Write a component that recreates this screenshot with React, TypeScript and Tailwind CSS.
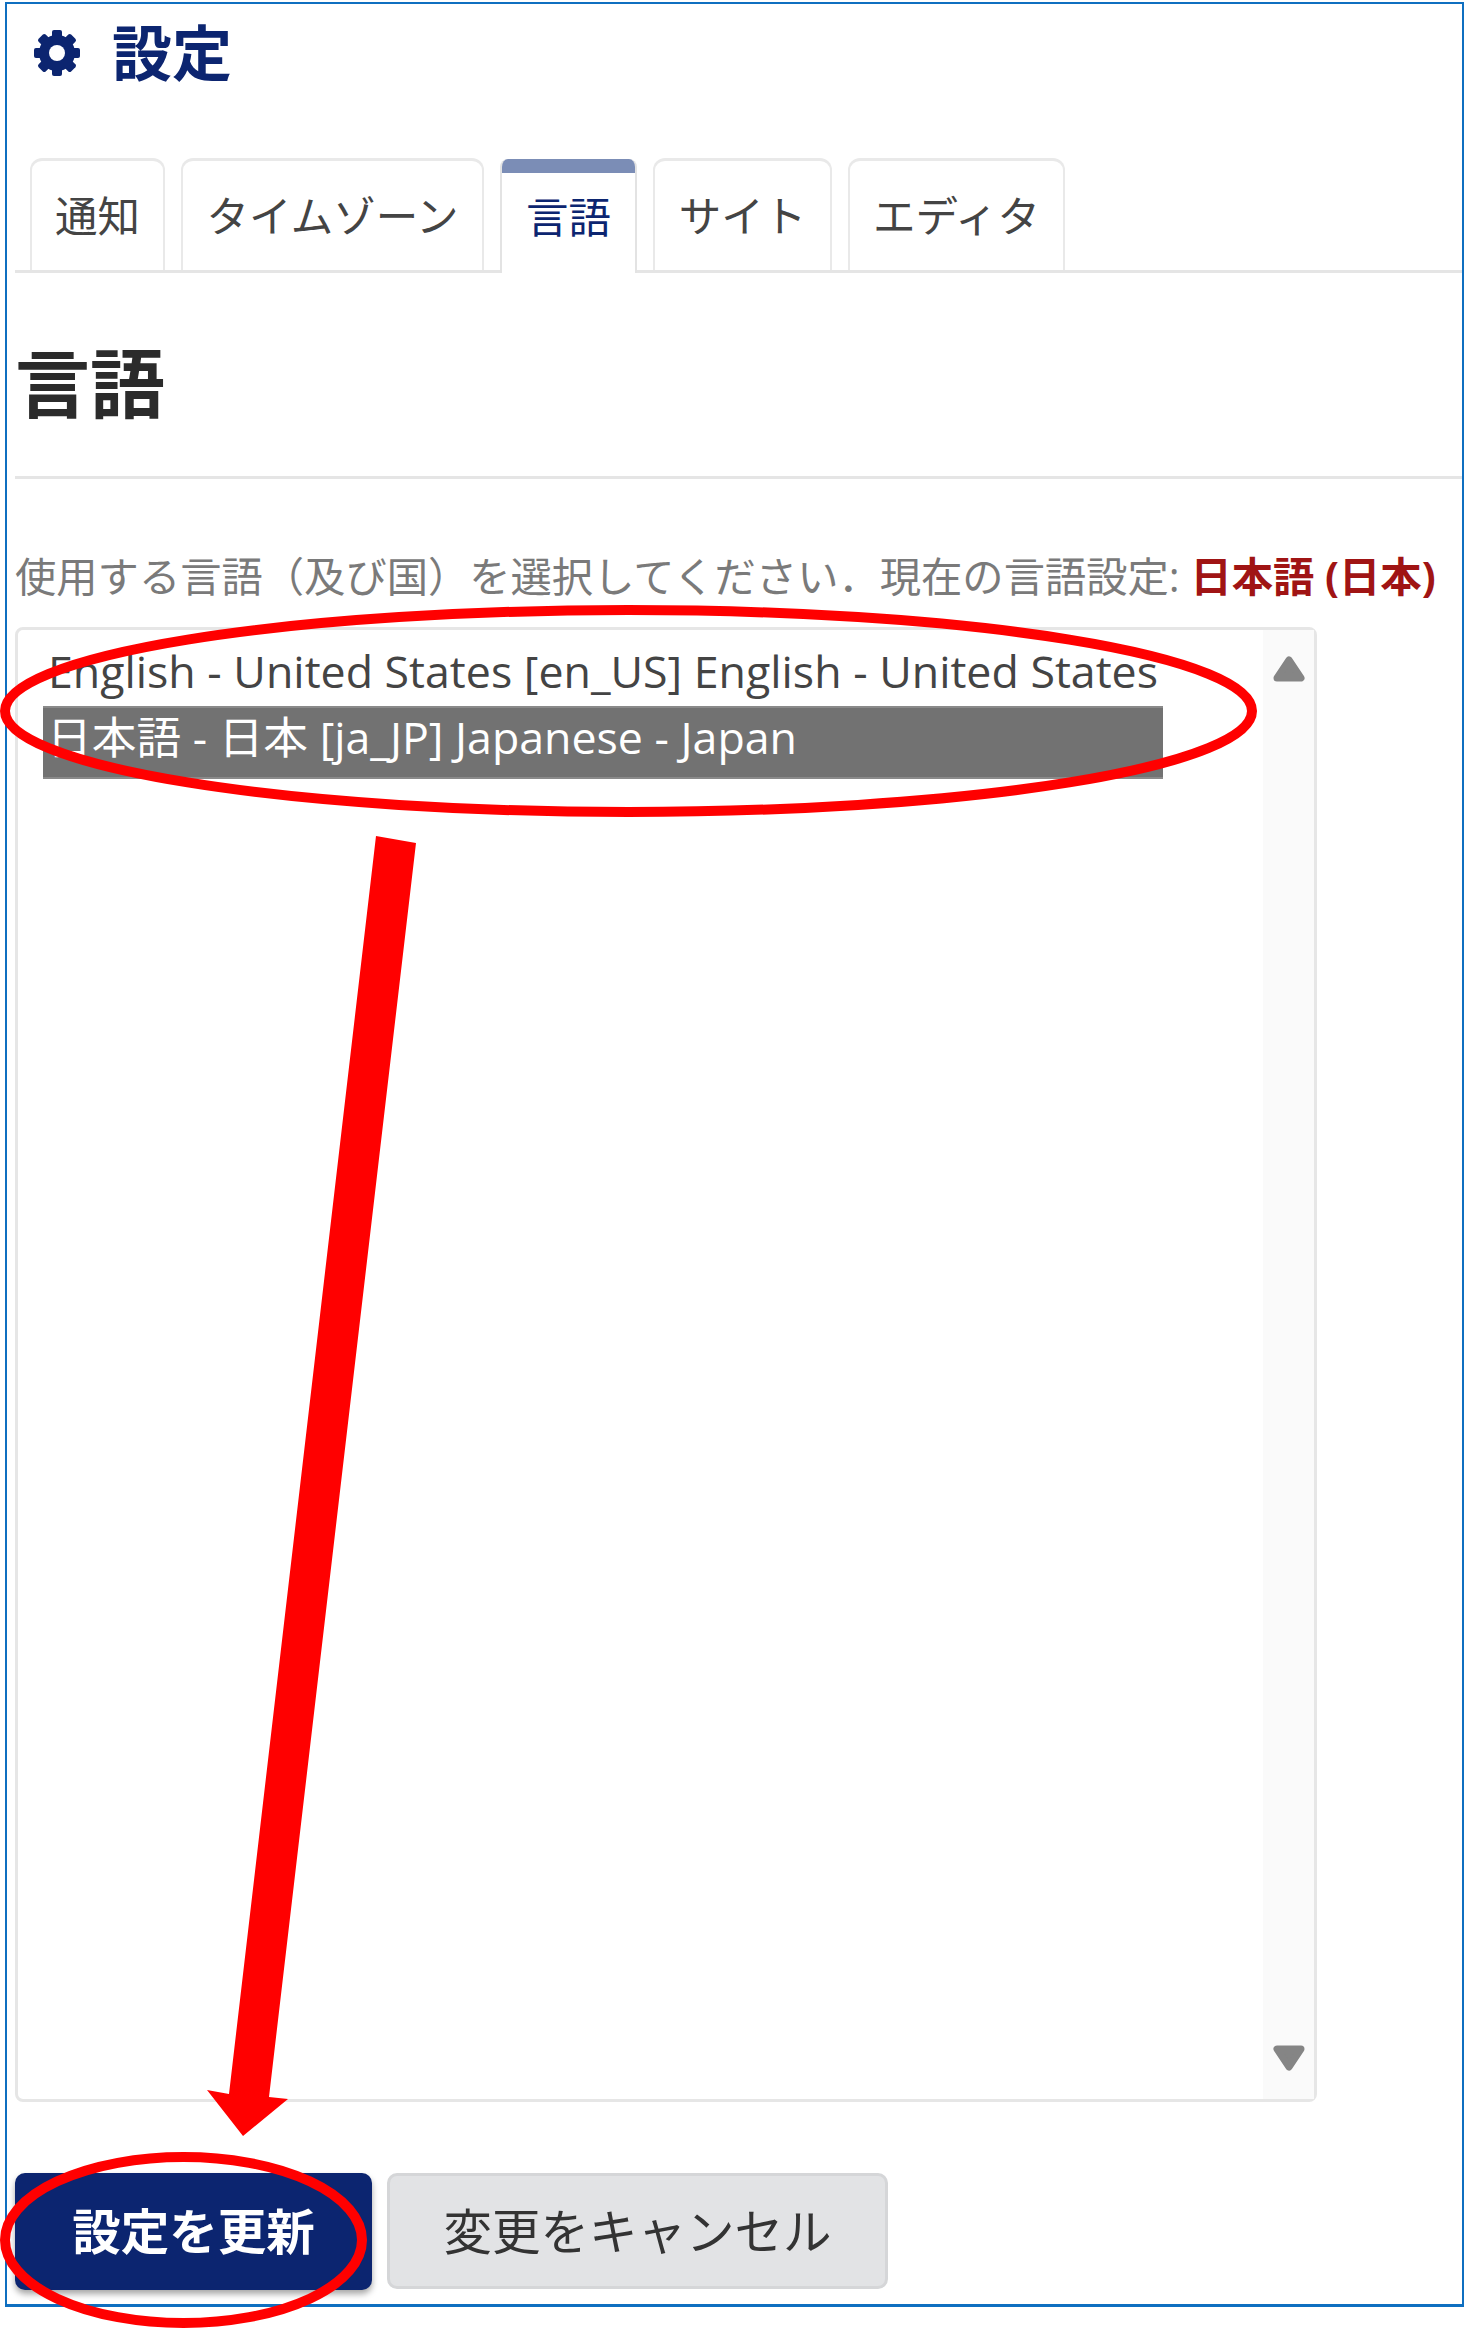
const font = "font-['Open_Sans','Noto_Sans_CJK_JP',sans-serif]";

const tabs = [
  { label: "通知", width: "w-[135px]", active: false },
  { label: "タイムゾーン", width: "w-[303px]", active: false },
  { label: "言語", width: "w-[137px]", active: true },
  { label: "サイト", width: "w-[179px]", active: false },
  { label: "エディタ", width: "w-[217px]", active: false },
];

function Tab({ label, width, active }: { label: string; width: string; active: boolean }) {
  if (active) {
    return (
      <div className={`${width} h-[114px] -mb-[3px] flex flex-col bg-white border-x-2 border-[#e3e3e3] rounded-t-lg overflow-hidden`}>
        <div className="h-[14px] -mx-[2px] bg-[#7b8db6]" />
        <div className="flex-1 flex items-center justify-center pb-[13px] text-[42.5px] text-[#0c2570]">{label}</div>
      </div>
    );
  }
  return (
    <div className={`${width} h-[112px] flex items-center justify-center pt-[1px] border-x-2 border-t-[3px] border-[#e9e9e9] rounded-t-xl text-[42.5px] text-[#444444]`}>
      {label}
    </div>
  );
}

function GearIcon() {
  return (
    <svg width="48" height="48" viewBox="0 0 48 48" fill="#0c2570" className="flex-none">
      {[0, 45, 90, 135].map((a) => (
        <rect key={a} x="19" y="1" width="10" height="46" rx="2" transform={`rotate(${a} 24 24)`} />
      ))}
      <circle cx="24" cy="24" r="13" fill="none" stroke="#0c2570" strokeWidth="10" />
      <circle cx="24" cy="24" r="8" fill="#ffffff" />
    </svg>
  );
}

function Annotations() {
  // red marks drawn on top of the screenshot
  return (
    <svg className="absolute inset-0 pointer-events-none" width="1466" height="2329" viewBox="0 0 1466 2329">
      <ellipse cx="628.5" cy="711" rx="623.5" ry="101" fill="none" stroke="#ff0000" strokeWidth="10" />
      <ellipse cx="183.5" cy="2240" rx="178.5" ry="83" fill="none" stroke="#ff0000" strokeWidth="10" />
      <polygon points="376,836 416,843 269,2097 288,2099 243,2136 207,2090 229,2094" fill="#ff0000" />
    </svg>
  );
}

export default function App() {
  return (
    <div className={`${font} relative w-[1466px] h-[2329px] bg-white overflow-hidden`}>
      <div className="ml-[5px] mt-[2px] w-[1459px] h-[2305px] border-2 border-[#0f6fc0] border-b-[3px] pl-[8px] flex flex-col">
        {/* title */}
        <div className="h-[81px] mt-[8px] flex items-center gap-[31px] pl-[18px] text-[#0c2570]">
          <GearIcon />
          <span className="text-[60px] leading-none font-bold">設定</span>
        </div>

        {/* tabs */}
        <div className="mt-[65px] flex gap-[16px] pl-[15px] border-b-[3px] border-[#e5e5e5] h-[115px] items-end">
          {tabs.map((t) => (
            <Tab key={t.label} {...t} />
          ))}
        </div>

        {/* section heading */}
        <div className="h-[206px] border-b-[3px] border-[#e5e5e5] flex items-start pt-[71px]">
          <h2 className="text-[75px] leading-[78px] font-bold text-[#2b2b2b]">言語</h2>
        </div>

        <p className="mt-[72px] text-[41.3px] leading-[50px] text-[#7a7a7a] whitespace-nowrap">
          使用する言語（及び国）を選択してください．現在の言語設定: <span className="font-bold text-[#a01414]">日本語 (日本)</span>
        </p>

        {/* language list */}
        <div className="mt-[26px] w-[1302px] h-[1475px] flex-none border-[3px] border-[#e6e6e6] rounded-lg flex">
          <div className="flex-1 pt-[13px] pl-[25px] pr-[100px] text-[44.7px] text-[#444444] whitespace-nowrap">
            <div className="h-[63px] leading-[56px] pl-[5px]">English - United States [en_US] English - United States</div>
            <div className="h-[73px] leading-[58px] pl-[4px] bg-[#727272] text-white border-y-[2px] border-[#8a8a8a]">日本語 - 日本 [ja_JP] Japanese - Japan</div>
          </div>
          <div className="w-[51px] bg-[#fafafa] flex flex-col justify-between items-center pt-[26px] pb-[28px]">
            <svg width="32" height="26" viewBox="0 0 32 26"><path d="M16 4 L28 22 H4 Z" fill="#858585" stroke="#858585" strokeWidth="7" strokeLinejoin="round" /></svg>
            <svg width="32" height="26" viewBox="0 0 32 26"><path d="M4 4 H28 L16 22 Z" fill="#858585" stroke="#858585" strokeWidth="7" strokeLinejoin="round" /></svg>
          </div>
        </div>

        {/* actions */}
        <div className="mt-[71px] flex gap-[15px]">
          <button className="w-[357px] h-[117px] rounded-[10px] bg-[#0c2570] text-white text-[48.5px] font-bold shadow-[0_4px_6px_rgba(0,0,0,0.35)]">設定を更新</button>
          <button className="w-[501px] h-[116px] rounded-[10px] bg-[#e2e3e5] border-[3px] border-[#d5d6d8] text-[#333333] text-[48.5px]">変更をキャンセル</button>
        </div>
      </div>
      <Annotations />
    </div>
  );
}
